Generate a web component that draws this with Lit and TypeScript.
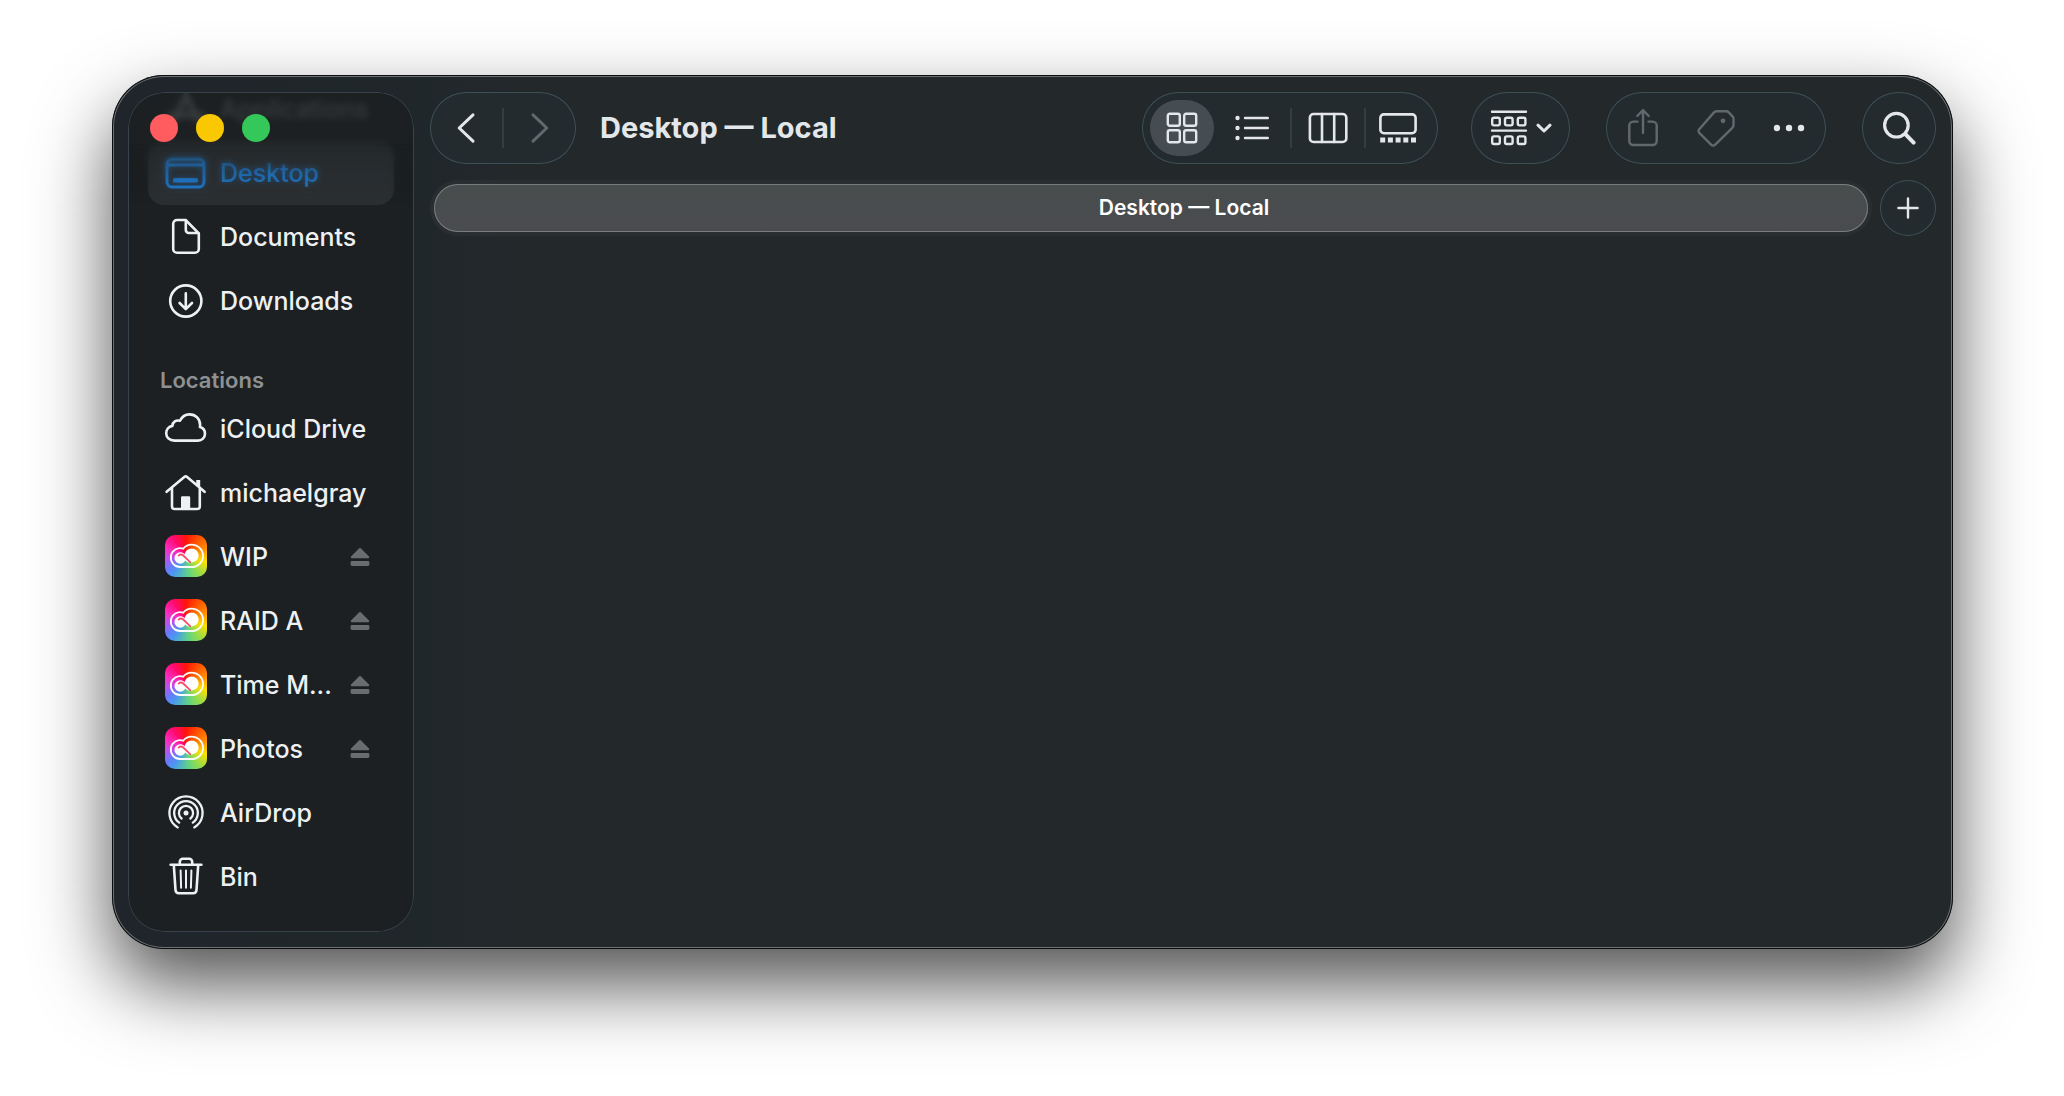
import { LitElement, html, css, svg, nothing, TemplateResult } from "lit";
import { customElement, property, state } from "lit/decorators.js";
import { classMap } from "lit/directives/class-map.js";

type Glyph = ReturnType<typeof svg>;

interface Place {
  label: string;
  icon: string;
  ejectable?: boolean;
}

const FAVOURITES: Place[] = [
  { label: "Applications", icon: "applications" },
  { label: "Desktop", icon: "desktop" },
  { label: "Documents", icon: "document" },
  { label: "Downloads", icon: "download" },
];

const LOCATIONS: Place[] = [
  { label: "iCloud Drive", icon: "cloud" },
  { label: "michaelgray", icon: "home" },
  { label: "WIP", icon: "creative", ejectable: true },
  { label: "RAID A", icon: "creative", ejectable: true },
  { label: "Time M...", icon: "creative", ejectable: true },
  { label: "Photos", icon: "creative", ejectable: true },
  { label: "AirDrop", icon: "airdrop" },
  { label: "Bin", icon: "bin" },
];

/* Sidebar glyphs, drawn on a 44 x 44 grid. */
const PLACE_GLYPHS: Record<string, Glyph> = {
  applications: svg`<path d="M10 33 22 9l12 24M6 28h32" stroke-width="6"/>`,
  desktop: svg`
    <rect x="3" y="8" width="37" height="28" rx="5" stroke-width="3"/>
    <path d="M3.5 14h36" stroke-width="3"/>
    <rect x="9" y="27" width="25" height="4.6" rx="1.6" fill="currentColor" stroke="none"/>`,
  document: svg`
    <path d="M13 5h8.6L34.8 18.4V34a3.8 3.8 0 0 1-3.8 3.8H13A3.8 3.8 0 0 1 9.2 34V8.8A3.8 3.8 0 0 1 13 5z"/>
    <path d="M21.8 5.4V15a3 3 0 0 0 3 3h9.6"/>`,
  download: svg`
    <circle cx="21.8" cy="22" r="15.6"/>
    <path d="M21.8 14.4v15M15.6 24l6.2 6.2L28 24"/>`,
  cloud: svg`
    <path d="M10.5 33.6C5.6 33.6 2.2 30.4 2.2 26.2c0-3.8 2.6-6.7 6.2-7.3.2-4 3.8-6.2 7.6-5.1 1.9-4 5.4-6.4 9.6-6.4 6 0 10.5 4.6 10.5 10.6 0 .8-.1 1.4-.2 2 3 .8 5.1 3.5 5.1 6.7 0 3.9-3 6.9-7 6.9z"/>`,
  home: svg`
    <path d="M2.6 20.8 20.3 6a2.2 2.2 0 0 1 2.8 0l17.5 14.8"/>
    <path d="M8 17.5V35.4A2.6 2.6 0 0 0 10.6 38h22.6a2.6 2.6 0 0 0 2.6-2.6V17.5"/>
    <path d="M32.2 9h4v8l-4-3.4z" fill="currentColor" stroke="none"/>
    <path d="M17 38V26.4a1.2 1.2 0 0 1 1.2-1.2h6.8a1.2 1.2 0 0 1 1.2 1.2V38z" fill="currentColor" stroke="none"/>`,
  airdrop: svg`
    <path d="M13.7 36.4a16.6 16.6 0 1 1 16.6 0" stroke-width="2.3"/>
    <path d="M15.2 31.6a11.8 11.8 0 1 1 13.6 0" stroke-width="2.3"/>
    <path d="M17.6 27.5a7.1 7.1 0 1 1 8.8 0" stroke-width="2.3"/>
    <circle cx="22" cy="22" r="2.5" fill="currentColor" stroke="none"/>`,
  bin: svg`
    <path d="M6.6 9.8h30.8"/>
    <path d="M15.8 9.5V6.8a3 3 0 0 1 3-3h6.4a3 3 0 0 1 3 3v2.7"/>
    <path d="M9.8 10l1.7 25a3.4 3.4 0 0 0 3.4 3.2h14.2a3.4 3.4 0 0 0 3.4-3.2l1.7-25"/>
    <path d="M16.6 15.4l.5 17.4M22 15.4v17.4M27.4 15.4l-.5 17.4" stroke-width="2"/>`,
};

const placeIcon = (name: string): TemplateResult =>
  name === "creative"
    ? html`<span class="creative">
        <svg viewBox="0 0 42 42" aria-hidden="true">
          <path d="M25.6 32H15.4a9.4 9.4 0 1 1 2.800-18.300A11.200 11.200 0 1 1 25.600 32z" fill="none" stroke="#fff" stroke-width="1.8"/>
          <circle cx="26.600" cy="20.400" r="7" fill="#fff"/>
          <path d="M15.200 17.200c1.700 0 3 .6 4.200 1.700l7.800 7.500c-1.500 1.600-4.200 1.600-5.800.1l-1.200-1.100c-1.100 2.100-2.900 3.300-5 3.300a5.750 5.750 0 0 1 0-11.500z" fill="#fff"/>
          <path d="M13.600 20.600c1.500-1.500 3.200-1.400 4.600-.1l7 6.700" fill="none" stroke="#f9506e" stroke-width="1.8" stroke-linecap="round"/>
        </svg>
      </span>`
    : html`<svg class="glyph" viewBox="0 0 44 44" aria-hidden="true">${PLACE_GLYPHS[name]}</svg>`;

const glyph = (w: number, h: number, body: Glyph): TemplateResult =>
  html`<svg class="glyph" width=${w} height=${h} viewBox="0 0 ${w} ${h}" aria-hidden="true">${body}</svg>`;

const TOOL = {
  back: glyph(24, 32, svg`<path d="M19 2.8 5.2 16 19 29.2" stroke-width="3"/>`),
  forward: glyph(24, 32, svg`<path d="M5 2.8 18.8 16 5 29.2" stroke-width="3"/>`),
  icons: glyph(32, 32, svg`
    <rect x="1.8" y="1.8" width="12" height="12" rx="2"/>
    <rect x="18.2" y="1.8" width="12" height="12" rx="2"/>
    <rect x="1.8" y="18.2" width="12" height="12" rx="2"/>
    <rect x="18.2" y="18.2" width="12" height="12" rx="2"/>`),
  list: glyph(34, 26, svg`
    <path d="M10 3h22.8M10 13h22.8M10 23h22.8"/>
    <g fill="currentColor" stroke="none"><circle cx="2.5" cy="3" r="2.2"/><circle cx="2.5" cy="13" r="2.2"/><circle cx="2.5" cy="23" r="2.2"/></g>`),
  columns: glyph(40, 32, svg`
    <rect x="1.9" y="2" width="36.4" height="28" rx="3.6" stroke-width="2.6"/>
    <path d="M14 2v28M26.2 2v28" stroke-width="2.6"/>`),
  gallery: glyph(38, 32, svg`
    <rect x="1.4" y="2.4" width="35.2" height="18.8" rx="3.4" stroke-width="2.6"/>
    <path d="M1.2 25.4h5v5h-5zM8.9 25.4h5v5h-5zM16.6 25.4h5v5h-5zM24.3 25.4h5v5h-5zM32 25.4h5v5h-5z" fill="currentColor" stroke="none"/>`),
  group: glyph(38, 36, svg`
    <path d="M2 1.8h34M2 20.6h34"/>
    <g>
      <rect x="2.2" y="7.8" width="7.6" height="7.6" rx="1.8"/>
      <rect x="15" y="7.8" width="7.6" height="7.6" rx="1.8"/>
      <rect x="27.8" y="7.8" width="7.6" height="7.6" rx="1.8"/>
      <rect x="2.2" y="26.4" width="7.6" height="7.6" rx="1.8"/>
      <rect x="15" y="26.4" width="7.6" height="7.6" rx="1.8"/>
      <rect x="27.8" y="26.4" width="7.6" height="7.6" rx="1.8"/>
    </g>`),
  chevron: glyph(16, 12, svg`<path d="M2 3.2 8 9l6-5.8" stroke-width="3"/>`),
  share: glyph(32, 40, svg`
    <path d="M10.5 13.6H6.3A4 4 0 0 0 2.3 17.6V33a4 4 0 0 0 4 4h19.4a4 4 0 0 0 4-4V17.6a4 4 0 0 0-4-4h-4.2"/>
    <path d="M16 25V3M10.3 8 16 2.2 21.7 8"/>`),
  tag: glyph(38, 38, svg`
    <path d="M19.6 2.2h9.8a3 3 0 0 1 2.1.9l4.2 4.5a3 3 0 0 1 .8 2.1v6.2a4 4 0 0 1-1.2 2.9L18 35.9a2.6 2.6 0 0 1-3.7 0L2.3 23.9a2.6 2.6 0 0 1 0-3.7L17 3.4a4 4 0 0 1 2.6-1.2z"/>
    <circle cx="26" cy="11.8" r="2.4" fill="currentColor" stroke="none"/>`),
  more: glyph(32, 8, svg`
    <g fill="currentColor" stroke="none"><circle cx="4" cy="4" r="3.2"/><circle cx="16" cy="4" r="3.2"/><circle cx="28" cy="4" r="3.2"/></g>`),
  search: glyph(34, 34, svg`
    <circle cx="14.4" cy="14.2" r="11.8" stroke-width="3.2"/>
    <path d="M23.6 23.4l8 8.2" stroke-width="4"/>`),
  plus: glyph(22, 22, svg`<path d="M11 1.4v19.2M1.4 11h19.2"/>`),
};

@customElement("finder-sidebar")
class FinderSidebar extends LitElement {
  @property() selected = "Desktop";

  static styles = css`
    * { box-sizing: border-box; }
    :host {
      display: block;
      position: relative;
      overflow: hidden;
      border-radius: 36px;
      background: #1c2022;
      color: #eef1f3;
      font: 500 25px/32px Inter, "Liberation Sans", sans-serif;
    }
    .rim {
      position: absolute;
      inset: 0;
      border-radius: 36px;
      box-shadow: inset 0 0 0 1px #38434b;
      pointer-events: none;
    }
    .scroller { padding: 0 20px; margin-top: -15px; }
    ul { list-style: none; margin: 0; padding: 0; }
    .row { display: flex; align-items: center; height: 64px; padding-right: 24px; border-radius: 16px; }
    .row.selected { background: #2b2f32; }
    .row.selected .place { color: #1e82de; }
    .row.passed { opacity: 0.25; }
    .place {
      flex: 1;
      display: flex;
      align-items: center;
      gap: 12px;
      padding-left: 16px;
      color: inherit;
      text-decoration: none;
      white-space: nowrap;
    }
    .glyph, .creative { flex: none; width: 44px; height: 44px; }
    .glyph {
      fill: none;
      stroke: currentColor;
      stroke-width: 2.6;
      stroke-linecap: round;
      stroke-linejoin: round;
    }
    .creative { padding: 0 1px 2px; }
    .creative svg {
      display: block;
      width: 42px;
      height: 42px;
      border-radius: 10px;
      background: conic-gradient(#ff1408, #ff5a00 40deg, #ff9a00 75deg, #ffe000 105deg, #8ddc50 145deg, #5fd08c 175deg, #4a98f0 215deg, #6a78ff 235deg, #c050f0 262deg, #ff28b8 295deg, #ff0a70 325deg, #ff1408);
    }
    h2 {
      display: flex;
      align-items: flex-end;
      height: 64px;
      margin: 0;
      padding-left: 12px;
      font-size: 22px;
      font-weight: 600;
      line-height: 34px;
      color: #8d9193;
    }
    .eject { padding: 0; border: 0; background: none; color: #696d6f; display: flex; }
    .eject svg { width: 20px; height: 20px; fill: currentColor; }
    .veil {
      position: absolute;
      inset: 0 0 auto;
      height: 112px;
      backdrop-filter: blur(3px);
      background: linear-gradient(#1c202280 40%, #1c202200);
      mask-image: linear-gradient(#000 46%, #0000);
      pointer-events: none;
    }
    .lights { position: absolute; top: 22px; left: 22px; display: flex; gap: 18px; }
    .light { width: 28px; height: 28px; padding: 0; border: 0; border-radius: 50%; }
    .close { background: #ff5c5f; }
    .minimise { background: #fac800; }
    .zoom { background: #34c759; }
  `;

  private row(place: Place) {
    const classes = {
      row: true,
      selected: place.label === this.selected,
      passed: place.icon === "applications",
    };
    return html`<li class=${classMap(classes)}>
      <a class="place" href="#">${placeIcon(place.icon)}<span>${place.label}</span></a>
      ${place.ejectable
        ? html`<button class="eject" aria-label="Eject ${place.label}">
            <svg viewBox="0 0 20 20" aria-hidden="true">
              <path d="M9 1.4a1.4 1.4 0 0 1 2 0l8 8.2c.6.7.2 1.6-.7 1.6H1.7c-.9 0-1.3-.9-.7-1.6z"/>
              <rect x=".6" y="14" width="18.8" height="5" rx="1.4"/>
            </svg>
          </button>`
        : nothing}
    </li>`;
  }

  render() {
    return html`
      <nav class="scroller" aria-label="Places">
        <ul>${FAVOURITES.map((p) => this.row(p))}</ul>
        <h2>Locations</h2>
        <ul>${LOCATIONS.map((p) => this.row(p))}</ul>
      </nav>
      <div class="veil"></div>
      <div class="lights">
        <button class="light close" aria-label="Close"></button>
        <button class="light minimise" aria-label="Minimise"></button>
        <button class="light zoom" aria-label="Zoom"></button>
      </div>
      <div class="rim"></div>
    `;
  }
}

@customElement("app-root")
class AppRoot extends LitElement {
  @state() private folder = "Desktop — Local";

  static styles = css`
    * { box-sizing: border-box; }
    :host {
      display: flex;
      min-height: 100vh;
      box-sizing: border-box;
      padding: 75px 111px 147px 112px;
      background: #fff;
      overflow: hidden;
      font-family: Inter, "Liberation Sans", sans-serif;
    }
    .window {
      flex: 1;
      display: grid;
      grid-template-columns: 286px 1fr;
      gap: 16px;
      padding: 17px 17px 17px 16px;
      border-radius: 52px;
      background: linear-gradient(90deg, #1f252a, #20272a 310px, #23282b 400px);
      box-shadow:
        inset 0 0 0 1px #0a0c0d,
        inset 0 0 0 2px #6c7173,
        0 36px 76px rgba(0, 0, 0, 0.68);
    }
    .main { display: flex; flex-direction: column; gap: 16px; min-width: 0; }
    .toolbar, .tabs { display: flex; align-items: center; }
    .toolbar { gap: 36px; height: 72px; }
    .views { display: flex; gap: 33px; }
    .heading { flex: 1; display: flex; align-items: center; gap: 24px; }
    h1 { margin: 0; color: #e4e7e9; font-size: 29px; font-weight: 700; line-height: 36px; white-space: nowrap; }
    .pill {
      display: flex;
      align-items: center;
      height: 72px;
      border-radius: 36px;
      background: #242b2f;
      box-shadow: inset 0 0 0 1px #3d5058;
    }
    .segmented { padding: 0 8px; }
    .tool {
      flex: none;
      display: flex;
      align-items: center;
      justify-content: center;
      gap: 8px;
      width: 73px;
      height: 56px;
      padding: 0;
      border: 0;
      border-radius: 28px;
      background: none;
      color: #e3e7ea;
    }
    .segmented .tool, .history .tool { width: 72px; }
    .segmented .edge { width: 64px; }
    .segmented .wide { width: 76px; }
    .tool.menu { width: 99px; }
    .tool.active { background: #464d52; }
    .tool:disabled { color: #62696d; }
    .divider { flex: none; width: 2px; height: 40px; background: #363d41; }
    .search, .share { justify-content: center; }
    .share { width: 220px; }
    .search { width: 74px; }
    .glyph {
      flex: none;
      fill: none;
      stroke: currentColor;
      stroke-width: 2.4;
      stroke-linecap: round;
      stroke-linejoin: round;
    }
    .tabs { gap: 8px; }
    .track { flex: 1; display: flex; padding: 4px; border-radius: 28px; background: #292e31; }
    .tab {
      flex: 1;
      height: 48px;
      padding: 0 0 0 66px;
      border: 0;
      border-radius: 24px;
      background: linear-gradient(#484d4d, #4a4b4f);
      box-shadow: inset 0 0 0 1px #787d81;
      color: #fff;
      font: 600 21px/28px Inter, "Liberation Sans", sans-serif;
    }
    .add { width: 56px; height: 56px; border-radius: 28px; }
    .add .tool { width: 56px; }
  `;

  render() {
    return html`
      <div class="window">
        <finder-sidebar selected="Desktop"></finder-sidebar>
        <main class="main">
          <header class="toolbar">
            <div class="heading">
              <div class="pill history">
                <button class="tool" aria-label="Back">${TOOL.back}</button>
                <span class="divider"></span>
                <button class="tool" aria-label="Forward" disabled>${TOOL.forward}</button>
              </div>
              <h1>${this.folder}</h1>
            </div>
            <div class="views">
              <div class="pill segmented">
                <button class="tool edge active" aria-label="Icons">${TOOL.icons}</button>
                <button class="tool wide" aria-label="List">${TOOL.list}</button>
                <span class="divider"></span>
                <button class="tool" aria-label="Columns">${TOOL.columns}</button>
                <span class="divider"></span>
                <button class="tool edge" aria-label="Gallery">${TOOL.gallery}</button>
              </div>
              <div class="pill">
                <button class="tool menu" aria-label="Group items">${TOOL.group}${TOOL.chevron}</button>
              </div>
            </div>
            <div class="pill share">
              <button class="tool" aria-label="Share" disabled>${TOOL.share}</button>
              <button class="tool" aria-label="Edit tags" disabled>${TOOL.tag}</button>
              <button class="tool" aria-label="More">${TOOL.more}</button>
            </div>
            <div class="pill search">
              <button class="tool" aria-label="Search">${TOOL.search}</button>
            </div>
          </header>
          <div class="tabs">
            <div class="track" role="tablist">
              <button class="tab" role="tab" aria-selected="true">${this.folder}</button>
            </div>
            <div class="pill add">
              <button class="tool" aria-label="New tab">${TOOL.plus}</button>
            </div>
          </div>
        </main>
      </div>
    `;
  }
}
